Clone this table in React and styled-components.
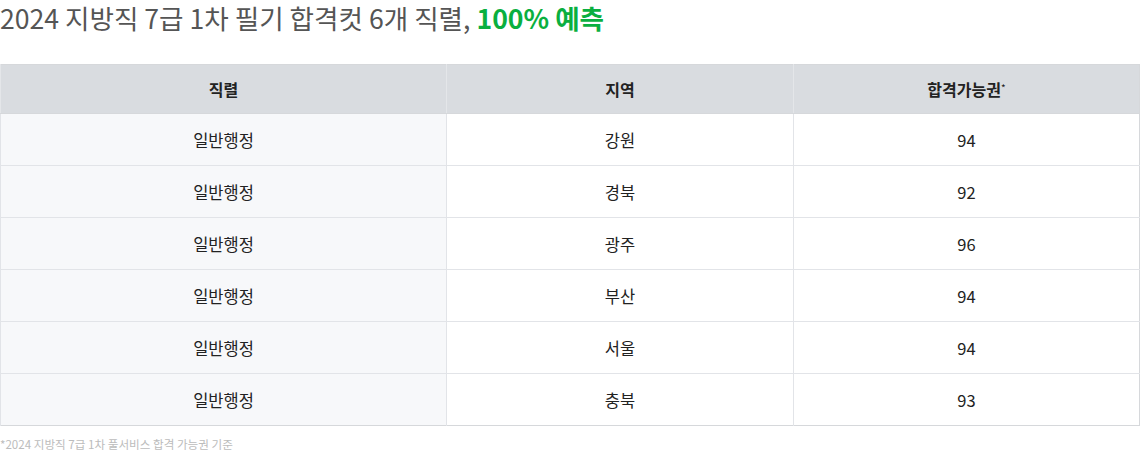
import React from 'react';
import styled, { createGlobalStyle } from 'styled-components';

const GlobalStyle = createGlobalStyle`
  body {
    margin: 0;
    background: #fff;
    font-family: "Noto Sans CJK KR", "Noto Sans", sans-serif;
  }
`;

const Wrap = styled.div`
  width: 1140px;
`;

const Title = styled.h2`
  margin: 0;
  height: 64px;
  font-size: 26.6px;
  font-weight: 400;
  line-height: 36px;
  color: #555;
`;

const Accent = styled.span`
  color: #0aaf3f;
  font-weight: 700;
`;

const Table = styled.table`
  width: 100%;
  border-collapse: collapse;
  table-layout: fixed;
  border: 1px solid #d6d8db;
`;

const Th = styled.th`
  height: 48px;
  background: #d9dce0;
  font-size: 16px;
  font-weight: 700;
  color: #222;
  text-align: center;
  border-left: 1px solid #e4e6e9;
  border-bottom: 1px solid #d6d8db;
  padding: 0;
  sup {
    font-size: 10px;
    font-weight: 400;
    vertical-align: 4px;
  }
`;

const Td = styled.td`
  height: 51px;
  padding: 0;
  text-align: center;
  font-size: 16.5px;
  color: #222;
  background: ${p => (p.$first ? '#f7f8fa' : '#fff')};
  border-left: 1px solid #e2e4e8;
  border-top: 1px solid #e2e4e8;
`;

const Note = styled.p`
  margin: 10px 0 0;
  font-size: 11.6px;
  color: #bcbcbc;
`;

const rows = [
  ['일반행정', '강원', 94],
  ['일반행정', '경북', 92],
  ['일반행정', '광주', 96],
  ['일반행정', '부산', 94],
  ['일반행정', '서울', 94],
  ['일반행정', '충북', 93],
];

export default function App() {
  return (
    <Wrap>
      <GlobalStyle />
      <Title>
        2024 지방직 7급 1차 필기 합격컷 6개 직렬, <Accent>100% 예측</Accent>
      </Title>
      <Table>
        <colgroup>
          <col style={{ width: '446px' }} />
          <col style={{ width: '347px' }} />
          <col />
        </colgroup>
        <thead>
          <tr>
            <Th>직렬</Th>
            <Th>지역</Th>
            <Th>
              합격가능권<sup>*</sup>
            </Th>
          </tr>
        </thead>
        <tbody>
          {rows.map(([job, area, score], i) => (
            <tr key={i}>
              <Td $first>{job}</Td>
              <Td>{area}</Td>
              <Td>{score}</Td>
            </tr>
          ))}
        </tbody>
      </Table>
      <Note>*2024 지방직 7급 1차 풀서비스 합격 가능권 기준</Note>
    </Wrap>
  );
}
